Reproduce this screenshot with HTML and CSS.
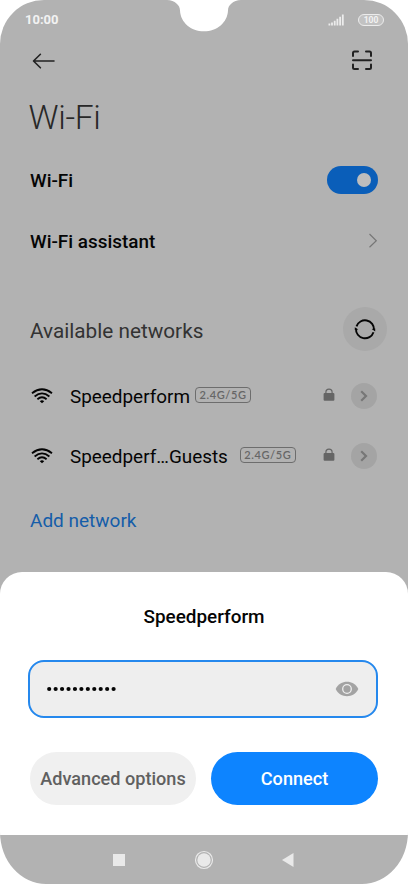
FILE: index.html
```html
<!DOCTYPE html>
<html lang="en">
<head>
<meta charset="utf-8">
<title>Wi-Fi</title>
<link rel="stylesheet" href="styles.css">
</head>
<body>
<div class="phone">
  <svg class="notch" width="74" height="32" viewBox="0 0 74 32"><path d="M0 0C8 .5 13 5 13 10.500C13.500 22.500 24 31.300 37 31.300S60.500 22.500 61 10.500C61 5 66 .5 74 0Z" fill="#fff"/></svg>
  <header class="status">
    <span class="clock">10:00</span>
    <svg class="signal" width="17" height="12" viewBox="0 0 17 12" fill="#ececec"><path d="M.5 9.500h1.800V11.500H.5zM3.100 8.500h1.800v3H3.100zM5.800 6.800h1.800v4.700H5.800zM8.500 4.800h1.800v6.700H8.500zM11.200 2.800H13v8.700h-1.800zM13.900.6h1.800v10.900h-1.800z"/></svg>
    <span class="battery">100</span>
  </header>
  <div class="appbar">
    <svg width="24" height="18" viewBox="0 0 24 18" fill="none" stroke="#222" stroke-width="1.600" stroke-linecap="round" stroke-linejoin="round"><path d="M22 9H1.800M8.400 2.300L1.500 9l6.900 6.800"/></svg>
    <svg width="22" height="22" viewBox="0 0 22 22" fill="none" stroke="#222" stroke-width="2" stroke-linecap="round" stroke-linejoin="round"><path d="M2 6V3Q2 1.500 3.500 1.500H7M15 1.500h3.500Q20 1.500 20 3v3M2 14.500v3q0 1.500 1.500 1.500H7M15 19h3.500Q20 19 20 17.500v-3M2 10.300h18"/></svg>
  </div>
  <h1 class="title"><span>Wi-Fi</span></h1>
  <div class="row wifi"><span class="strong">Wi-Fi</span><span class="toggle"></span></div>
  <div class="row assistant"><span class="strong">Wi-Fi assistant</span>
    <svg width="10" height="16" viewBox="0 0 10 16" fill="none" stroke="#777" stroke-width="1.200"><path d="M1.500 1L8.300 7.700l-6.800 6.600"/></svg>
  </div>
  <div class="row available"><span class="heading">Available networks</span>
    <span class="refresh"><svg width="22" height="22" viewBox="0 0 22 22" fill="none" stroke="#050505" stroke-width="1.900"><path d="M2.500 8.400A9 9 0 0 1 20 11.900M19.500 14.200A9 9 0 0 1 2 10.700"/><path d="M17.700 11L21.200 10.600V13.400zM4.300 11.600L.8 12V9.200z" fill="#050505" stroke="none"/></svg></span>
  </div>
  <div class="row network">
    <svg class="fan" width="22" height="16" viewBox="0 0 22 16"><g fill="none" stroke="#050505" stroke-width="1.800"><path d="M1 5.200Q11-2.700 21 5.200M3.600 8.500Q11 2.300 18.400 8.500M6.400 11.300Q11 7.300 15.600 11.300"/></g><path d="M8.800 13.200Q11 11.400 13.200 13.200L11 15.300z"/></svg>
    <span class="name">Speedperform</span><span class="band">2.4G/5G</span>
    <svg class="lock" width="12" height="14" viewBox="0 0 12 14"><rect x=".6" y="5" width="10.800" height="7.700" rx="1" fill="#656565"/><path d="M2.900 5.500V4.200a3.100 3.100 0 0 1 6.200 0v1.300" fill="none" stroke="#656565" stroke-width="1.200"/></svg>
    <span class="more"><svg width="8" height="12" viewBox="0 0 8 12" fill="none" stroke="#777" stroke-width="2.200"><path d="M1.200 1.300L6 6l-4.800 4.700"/></svg></span>
  </div>
  <div class="row network">
    <svg class="fan" width="22" height="16" viewBox="0 0 22 16"><g fill="none" stroke="#050505" stroke-width="1.800"><path d="M1 5.200Q11-2.700 21 5.200M3.600 8.500Q11 2.300 18.400 8.500M6.400 11.300Q11 7.300 15.600 11.300"/></g><path d="M8.800 13.200Q11 11.400 13.200 13.200L11 15.300z"/></svg>
    <span class="name guests">Speedperf…Guests</span><span class="band">2.4G/5G</span>
    <svg class="lock" width="12" height="14" viewBox="0 0 12 14"><rect x=".6" y="5" width="10.800" height="7.700" rx="1" fill="#656565"/><path d="M2.900 5.500V4.200a3.100 3.100 0 0 1 6.200 0v1.300" fill="none" stroke="#656565" stroke-width="1.200"/></svg>
    <span class="more"><svg width="8" height="12" viewBox="0 0 8 12" fill="none" stroke="#777" stroke-width="2.200"><path d="M1.200 1.300L6 6l-4.800 4.700"/></svg></span>
  </div>
  <div class="row add"><span>Add network</span></div>
  <section class="sheet">
    <h2><span>Speedperform</span></h2>
    <div class="field">
      <svg width="72" height="6" viewBox="0 0 72 6"><path d="M2.200 3h64.600" fill="none" stroke="#050505" stroke-width="4.200" stroke-linecap="round" stroke-dasharray="0 6.440"/></svg>
      <svg width="24" height="16" viewBox="0 0 24 16"><path d="M.7 8C5.200-1.600 18.800-1.600 23.300 8C18.800 17.600 5.200 17.600.7 8z" fill="#a3a3a3"/><circle cx="12" cy="8" r="4.300" fill="#a3a3a3" stroke="#eee" stroke-width="1.300"/></svg>
    </div>
    <div class="buttons"><button class="advanced"><span>Advanced options</span></button><button class="connect"><span>Connect</span></button></div>
  </section>
  <nav class="nav">
    <svg width="12" height="12" viewBox="0 0 12 12"><rect width="12" height="12" fill="#e9e9e9"/></svg>
    <svg width="20" height="20" viewBox="0 0 20 20"><circle cx="10" cy="10" r="8.500" fill="none" stroke="#e9e9e9" stroke-width="1.200"/><circle cx="10" cy="10" r="6.700" fill="#e9e9e9"/></svg>
    <svg width="12" height="14" viewBox="0 0 12 14"><path d="M11.500 0v14L0 7z" fill="#e9e9e9"/></svg>
  </nav>
</div>
</body>
</html>
```
FILE: styles.css
```css
* { box-sizing: border-box; }
body { margin: 0; background: #fff; font-family: Roboto, sans-serif; color: #050505; }
svg { display: block; flex: none; }
.phone { position: relative; width: 408px; height: 884px; display: flex; flex-direction: column; background: #b2b2b2; border-radius: 44px 44px 46px 46px / 44px 44px 52px 52px; overflow: hidden; }
.notch { position: absolute; left: 167px; top: 0; }
.status { height: 39px; padding: 0 24px 0 25px; display: flex; align-items: center; color: #f2f2f2; flex: none; }
.clock { font-size: 13px; font-weight: 700; }
.signal { margin: 0 13px 0 auto; }
.battery { width: 26px; height: 12px; border: 1px solid #ececec; border-radius: 6px; background: #c2c2c2; font-size: 8.500px; font-weight: 700; line-height: 10px; text-align: center; }
.appbar { height: 43px; padding: 0 35px 0 32px; display: flex; justify-content: space-between; align-items: center; flex: none; }
.title { height: 70px; margin: 0; padding-left: 28.500px; display: flex; align-items: center; font-size: 33.500px; font-weight: 300; letter-spacing: -.3px; color: #282828; }
.row { padding: 0 30px; display: flex; align-items: center; flex: none; }
.wifi { height: 56px; justify-content: space-between; }
.strong { font-size: 18.900px; font-weight: 500; padding-top: 1px; }
.toggle { width: 51px; height: 28px; padding: 7px; display: flex; justify-content: flex-end; border-radius: 14px; background: #0a5eb9; }
.toggle::after { content: ""; width: 14px; height: 14px; border-radius: 50%; background: #bdbdbd; }
.assistant { height: 66px; justify-content: space-between; }
.available { height: 60px; margin-top: 25px; padding-right: 21px; justify-content: space-between; }
.heading { font-size: 20.750px; padding-top: 3px; color: #333; }
.refresh { width: 44px; height: 44px; display: grid; place-items: center; border-radius: 50%; background: #a9a9a9; }
.network { height: 60px; }
.available + .network { margin-top: 7px; }
.fan { margin: 0 17px 0 1px; }
.name { font-size: 18.900px; margin-right: 5px; white-space: nowrap; }
.guests { margin-right: 12px; }
.band { width: 56px; height: 16px; margin-top: -2px; border: 1px solid #6d6d6d; border-radius: 4px; color: #666; font: 600 11px/14px Lato, sans-serif; letter-spacing: .6px; text-align: center; white-space: nowrap; }
.lock { margin-left: auto; margin-top: -2px; }
.more { width: 26px; height: 26px; margin: -1px 1px 0 16px; display: grid; place-items: center; border-radius: 50%; background: #a4a4a4; }
.add { height: 60px; margin-top: 4px; font-size: 19px; color: #155da9; }
.sheet { height: 263px; margin-top: auto; background: #fff; border-radius: 22px 22px 0 0; padding: 0 30px; flex: none; }
.sheet h2 { height: 88px; margin: 0; display: flex; align-items: center; justify-content: center; font-size: 18.900px; font-weight: 500; }
.field { width: 350px; height: 58px; margin-left: -2px; padding: 0 17px; display: flex; align-items: center; justify-content: space-between; border: 2px solid #2588ed; border-radius: 16px; background: #eee; }
.buttons { margin-top: 34px; display: grid; grid-template-columns: 166px 167px; gap: 15px; }
button { height: 53px; padding: 0; border: 0; border-radius: 27px; font: 500 18.100px Roboto, sans-serif; white-space: nowrap; }
.advanced { background: #f0f0f0; color: #606060; }
.connect { background: #0d84ff; color: #fff; }
.nav { height: 49px; padding: 0 114px 0 113px; display: flex; flex: none; align-items: center; justify-content: space-between; }
```
